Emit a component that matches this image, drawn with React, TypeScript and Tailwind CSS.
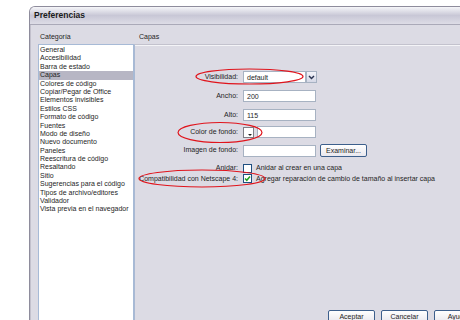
import React from "react"

const categories = [
  "General",
  "Accesibilidad",
  "Barra de estado",
  "Capas",
  "Colores de código",
  "Copiar/Pegar de Office",
  "Elementos invisibles",
  "Estilos CSS",
  "Formato de código",
  "Fuentes",
  "Modo de diseño",
  "Nuevo documento",
  "Paneles",
  "Reescritura de código",
  "Resaltando",
  "Sitio",
  "Sugerencias para el código",
  "Tipos de archivo/editores",
  "Validador",
  "Vista previa en el navegador",
]

function TextBox({ value = "", className = "" }: { value?: string; className?: string }) {
  return (
    <div
      className={`h-[12px] bg-white border border-[#a7b2c2] flex items-center pl-[3px] leading-none ${className}`}
    >
      {value}
    </div>
  )
}

function Checkbox({ checked = false }: { checked?: boolean }) {
  return (
    <div className="w-[9px] h-[9px] bg-white border border-[#1f4f80] flex items-center justify-center">
      {checked && (
        <svg width="7" height="7" viewBox="0 0 7 7">
          <path d="M1 3.4 L2.8 5.3 L6 1.4" fill="none" stroke="#21a121" strokeWidth="1.5" />
        </svg>
      )}
    </div>
  )
}

function XpButton({ label, className = "" }: { label: string; className?: string }) {
  return (
    <div
      className={`h-[13px] w-[47px] rounded-[2px] border border-[#3d5f8c] bg-linear-to-b from-[#ffffff] to-[#e9e8ee] flex items-center justify-center leading-none ${className}`}
    >
      {label}
    </div>
  )
}

export default function App() {
  return (
    <div className="relative w-[460px] h-[320px] overflow-hidden bg-white font-['Liberation_Sans',Arial,sans-serif] text-[7px] text-[#1e1e1e]">
      {/* Dialog window */}
      <div className="ml-[29px] mt-[6px] w-[462px] h-[330px] flex flex-col rounded-tl-[6px] border-l border-t border-[#8e8c9c] bg-[#dcdbe4] overflow-hidden">
        {/* Title bar */}
        <div className="h-[18px] shrink-0 flex items-center pl-[4px] border-b border-[#aaa9b8] bg-linear-to-b from-[#f6f6f9] via-[#c8c7d6] to-[#dddce6]">
          <span className="text-[8.5px] font-bold text-[#1a1a1a]">Preferencias</span>
        </div>

        <div className="flex flex-1">
          {/* Category list */}
          <div className="w-[104px] flex flex-col border-l border-[#c2c0cc]">
            <div className="h-[19px] flex items-end pb-[2px] pl-[9px]">Categoría</div>
            <div className="ml-[7px] w-[96px] flex-1 bg-white border border-[#a7bad6] pt-[1px]">
              {categories.map((c) => (
                <div
                  key={c}
                  className={`leading-[8.4px] h-[8.4px] pl-[1px] whitespace-nowrap ${
                    c === "Capas" ? "bg-[#b7b6c4]" : ""
                  }`}
                >
                  {c}
                </div>
              ))}
            </div>
          </div>

          {/* Panel */}
          <div className="flex-1 flex flex-col">
            <div className="h-[19px] flex items-end pb-[2px] pl-[5px]">Capas</div>
            <div className="flex-1 flex flex-col border-t border-t-[#c3c2cd] border-l border-l-[#a9b9d3] shadow-[inset_0_1px_0_#f4f4f7]">
              <div className="mt-[26px] grid grid-cols-[103px_auto] gap-x-[5px] items-center">
                <div className="text-right">Visibilidad:</div>
                <div className="flex">
                  <TextBox value="default" className="w-[63px]" />
                  <div className="w-[11px] h-[12px] border border-[#a7b2c2] bg-linear-to-b from-[#f4f4fa] to-[#d5d8e6] flex items-center justify-center">
                    <svg width="7" height="5" viewBox="0 0 7 5">
                      <path d="M1 1 L3.5 3.6 L6 1" fill="none" stroke="#2a3350" strokeWidth="1.4" />
                    </svg>
                  </div>
                </div>

                <div className="text-right mt-[7px]">Ancho:</div>
                <TextBox value="200" className="w-[73px] mt-[7px]" />

                <div className="text-right mt-[7px]">Alto:</div>
                <TextBox value="115" className="w-[73px] mt-[7px]" />

                <div className="text-right mt-[5px]">Color de fondo:</div>
                <div className="flex items-center gap-[3px] mt-[5px]">
                  <div className="relative w-[11px] h-[11px] border border-[#7e7e86] bg-white">
                    <div className="absolute right-[1px] bottom-[1px] w-0 h-0 border-l-[2px] border-r-[2px] border-t-[2px] border-l-transparent border-r-transparent border-t-[#222]" />
                  </div>
                  <TextBox className="w-[59px]" />
                </div>

                <div className="text-right mt-[6px]">Imagen de fondo:</div>
                <div className="flex items-center gap-[4px] mt-[6px]">
                  <TextBox className="w-[73px]" />
                  <XpButton label="Examinar..." />
                </div>

                <div className="text-right mt-[6px]">Anidar:</div>
                <div className="flex items-center gap-[4px] mt-[6px]">
                  <Checkbox />
                  <span>Anidar al crear en una capa</span>
                </div>

                <div className="text-right whitespace-nowrap">Compatibilidad con Netscape 4:</div>
                <div className="flex items-center gap-[4px] whitespace-nowrap">
                  <Checkbox checked />
                  <span>Agregar reparación de cambio de tamaño al insertar capa</span>
                </div>
              </div>

              <div className="mt-[126px] flex justify-end gap-[6px] pr-[10px]">
                <XpButton label="Aceptar" />
                <XpButton label="Cancelar" />
                <XpButton label="Ayuda" />
              </div>
            </div>
          </div>
        </div>
      </div>

      {/* Red annotation ellipses */}
      <svg className="absolute left-0 top-0 pointer-events-none" width="460" height="320">
        <ellipse cx="249.5" cy="76.5" rx="53.5" ry="7.5" fill="none" stroke="#e0141c" strokeWidth="1.2" />
        <ellipse cx="220" cy="132.5" rx="42" ry="10" fill="none" stroke="#e0141c" strokeWidth="1.2" />
        <ellipse cx="202" cy="178.5" rx="63" ry="8.5" fill="none" stroke="#e0141c" strokeWidth="1.2" />
      </svg>
    </div>
  )
}
